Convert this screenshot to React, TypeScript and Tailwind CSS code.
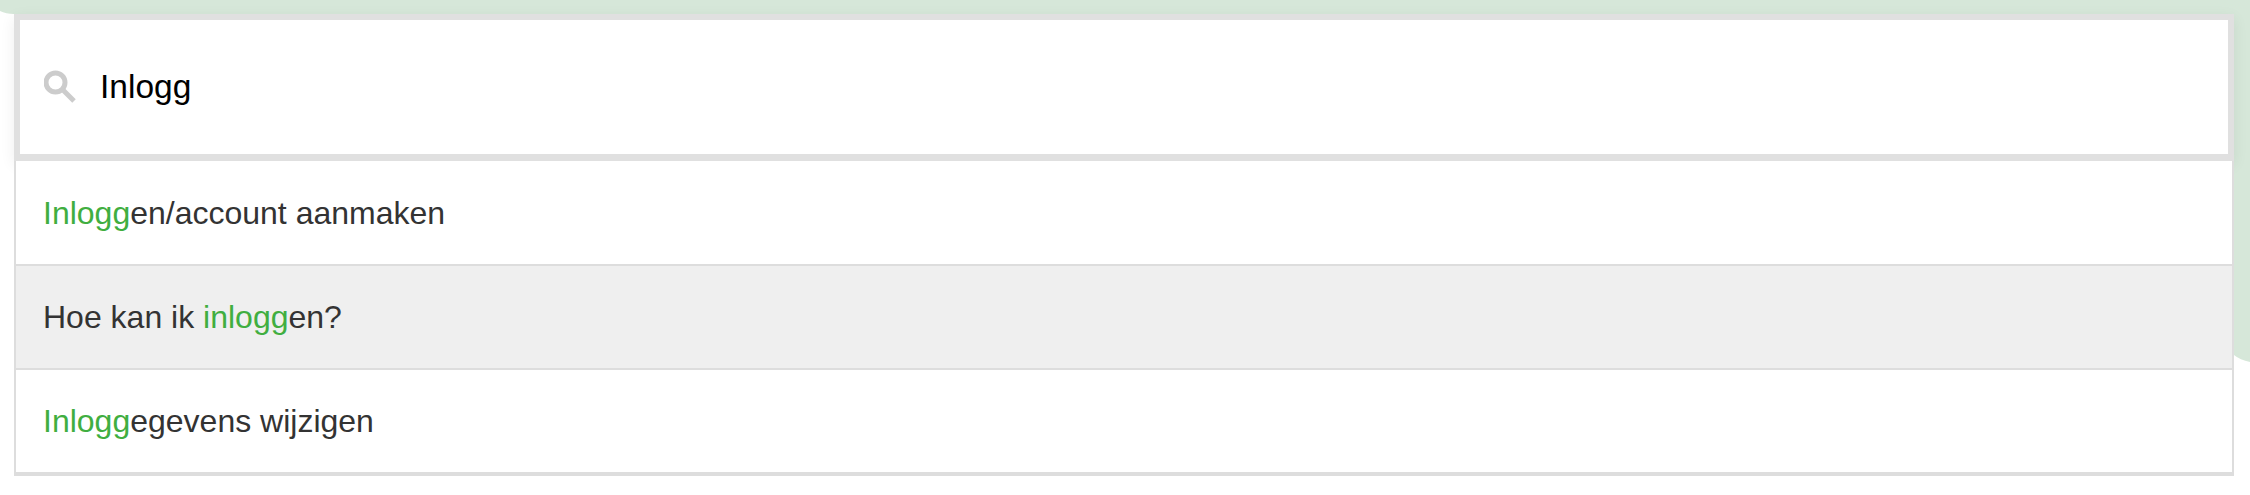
import React from 'react';

const results = [
  { before: '', match: 'Inlogg', after: 'en/account aanmaken', active: false },
  { before: 'Hoe kan ik ', match: 'inlogg', after: 'en?', active: true },
  { before: '', match: 'Inlogg', after: 'egevens wijzigen', active: false },
];

const SearchIcon = () => (
  <svg width="33" height="34" viewBox="0 0 33 34" fill="none" stroke="#cccccc" strokeWidth="5">
    <circle cx="11.5" cy="12.5" r="9.5" />
    <path d="M19 20 L30 31" />
  </svg>
);

const App: React.FC = () => {
  return (
    <div className="relative h-[495px] w-[2250px] overflow-hidden bg-white pt-[14px] pl-[14px] font-['Liberation_Sans',Arial,sans-serif]">
      {/* green backdrop, its lower edge runs diagonally behind the widget */}
      <svg className="absolute top-0 left-0" width="2250" height="495" viewBox="0 0 2250 495">
        <path d="M0 0 H2250 V362 Q2240 360 2234 355 L14 14 Q6 14 0 11 Z" fill="#d6e7d9" />
      </svg>

      <div className="relative w-[2220px]">
        <div className="flex h-[147px] items-center border-x-[6px] border-t-[6px] border-b-[7px] border-[#e0e0e0] bg-white pl-[24px] shadow-[0_4px_14px_rgba(0,0,0,0.07)]">
          <SearchIcon />
          <span className="ml-[23px] text-[33.5px] text-black">Inlogg</span>
        </div>

        <ul className="relative border-x-2 border-b-4 border-[#dddddd] bg-white">
          {results.map((row, i) => (
            <li
              key={i}
              className={`flex items-center pl-[27px] text-[32px] whitespace-pre text-[#333333] ${i > 0 ? 'h-[104px] border-t-2 border-[#dddddd]' : 'h-[103px]'} ${row.active ? 'bg-[#efefef]' : ''}`}
            >
              {row.before}
              <span className="text-[#40ae40]">{row.match}</span>
              {row.after}
            </li>
          ))}
        </ul>
      </div>
    </div>
  );
};

export default App;
